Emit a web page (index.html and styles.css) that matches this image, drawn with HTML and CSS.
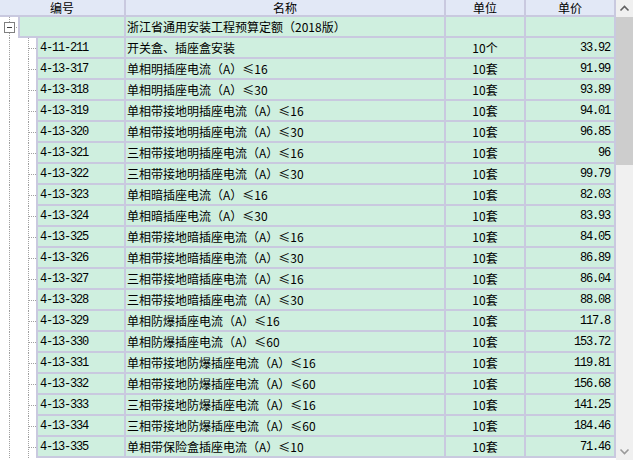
FILE: index.html
```html
<!DOCTYPE html>
<html lang="zh">
<head>
<meta charset="utf-8">
<title>定额</title>
<link rel="stylesheet" href="styles.css">
</head>
<body>
<div class="view">
  <div class="grid">
    <div class="head">
      <div class="hc c-code">编号</div>
      <div class="hc c-name">名称</div>
      <div class="hc c-unit">单位</div>
      <div class="hc c-price">单价</div>
    </div>
    <div class="row root">
      <div class="gutter"><span class="box"><span class="minus"></span></span><span class="stub"></span></div>
      <div class="cell c-code first"></div>
      <div class="cell c-name">浙江省通用安装工程预算定额（2018版）</div>
      <div class="cell c-unit"></div>
      <div class="cell c-price"></div>
    </div>
    <div class="row child"><div class="gutter"><span class="stub"></span></div><div class="cell c-code first">4-11-211</div><div class="cell c-name">开关盒、插座盒安装</div><div class="cell c-unit">10个</div><div class="cell c-price">33.92</div></div>
    <div class="row child"><div class="gutter"><span class="stub"></span></div><div class="cell c-code first">4-13-317</div><div class="cell c-name">单相明插座电流（A）≤16</div><div class="cell c-unit">10套</div><div class="cell c-price">91.99</div></div>
    <div class="row child"><div class="gutter"><span class="stub"></span></div><div class="cell c-code first">4-13-318</div><div class="cell c-name">单相明插座电流（A）≤30</div><div class="cell c-unit">10套</div><div class="cell c-price">93.89</div></div>
    <div class="row child"><div class="gutter"><span class="stub"></span></div><div class="cell c-code first">4-13-319</div><div class="cell c-name">单相带接地明插座电流（A）≤16</div><div class="cell c-unit">10套</div><div class="cell c-price">94.01</div></div>
    <div class="row child"><div class="gutter"><span class="stub"></span></div><div class="cell c-code first">4-13-320</div><div class="cell c-name">单相带接地明插座电流（A）≤30</div><div class="cell c-unit">10套</div><div class="cell c-price">96.85</div></div>
    <div class="row child"><div class="gutter"><span class="stub"></span></div><div class="cell c-code first">4-13-321</div><div class="cell c-name">三相带接地明插座电流（A）≤16</div><div class="cell c-unit">10套</div><div class="cell c-price">96</div></div>
    <div class="row child"><div class="gutter"><span class="stub"></span></div><div class="cell c-code first">4-13-322</div><div class="cell c-name">三相带接地明插座电流（A）≤30</div><div class="cell c-unit">10套</div><div class="cell c-price">99.79</div></div>
    <div class="row child"><div class="gutter"><span class="stub"></span></div><div class="cell c-code first">4-13-323</div><div class="cell c-name">单相暗插座电流（A）≤16</div><div class="cell c-unit">10套</div><div class="cell c-price">82.03</div></div>
    <div class="row child"><div class="gutter"><span class="stub"></span></div><div class="cell c-code first">4-13-324</div><div class="cell c-name">单相暗插座电流（A）≤30</div><div class="cell c-unit">10套</div><div class="cell c-price">83.93</div></div>
    <div class="row child"><div class="gutter"><span class="stub"></span></div><div class="cell c-code first">4-13-325</div><div class="cell c-name">单相带接地暗插座电流（A）≤16</div><div class="cell c-unit">10套</div><div class="cell c-price">84.05</div></div>
    <div class="row child"><div class="gutter"><span class="stub"></span></div><div class="cell c-code first">4-13-326</div><div class="cell c-name">单相带接地暗插座电流（A）≤30</div><div class="cell c-unit">10套</div><div class="cell c-price">86.89</div></div>
    <div class="row child"><div class="gutter"><span class="stub"></span></div><div class="cell c-code first">4-13-327</div><div class="cell c-name">三相带接地暗插座电流（A）≤16</div><div class="cell c-unit">10套</div><div class="cell c-price">86.04</div></div>
    <div class="row child"><div class="gutter"><span class="stub"></span></div><div class="cell c-code first">4-13-328</div><div class="cell c-name">三相带接地暗插座电流（A）≤30</div><div class="cell c-unit">10套</div><div class="cell c-price">88.08</div></div>
    <div class="row child"><div class="gutter"><span class="stub"></span></div><div class="cell c-code first">4-13-329</div><div class="cell c-name">单相防爆插座电流（A）≤16</div><div class="cell c-unit">10套</div><div class="cell c-price">117.8</div></div>
    <div class="row child"><div class="gutter"><span class="stub"></span></div><div class="cell c-code first">4-13-330</div><div class="cell c-name">单相防爆插座电流（A）≤60</div><div class="cell c-unit">10套</div><div class="cell c-price">153.72</div></div>
    <div class="row child"><div class="gutter"><span class="stub"></span></div><div class="cell c-code first">4-13-331</div><div class="cell c-name">单相带接地防爆插座电流（A）≤16</div><div class="cell c-unit">10套</div><div class="cell c-price">119.81</div></div>
    <div class="row child"><div class="gutter"><span class="stub"></span></div><div class="cell c-code first">4-13-332</div><div class="cell c-name">单相带接地防爆插座电流（A）≤60</div><div class="cell c-unit">10套</div><div class="cell c-price">156.68</div></div>
    <div class="row child"><div class="gutter"><span class="stub"></span></div><div class="cell c-code first">4-13-333</div><div class="cell c-name">三相带接地防爆插座电流（A）≤16</div><div class="cell c-unit">10套</div><div class="cell c-price">141.25</div></div>
    <div class="row child"><div class="gutter"><span class="stub"></span></div><div class="cell c-code first">4-13-334</div><div class="cell c-name">三相带接地防爆插座电流（A）≤60</div><div class="cell c-unit">10套</div><div class="cell c-price">184.46</div></div>
    <div class="row child"><div class="gutter"><span class="stub"></span></div><div class="cell c-code first">4-13-335</div><div class="cell c-name">单相带保险盒插座电流（A）≤10</div><div class="cell c-unit">10套</div><div class="cell c-price">71.46</div></div>
  </div>
  <div class="scrollbar">
    <div class="sb-btn"><svg width="17" height="17" viewBox="0 0 17 17"><path d="M4.5 10.5 L8.5 6.5 L12.5 10.5" fill="none" stroke="#606060" stroke-width="1.6"/></svg></div>
    <div class="sb-thumb"></div>
    <div class="sb-track"></div>
    <div class="sb-btn"><svg width="17" height="17" viewBox="0 0 17 17"><path d="M4.5 6.5 L8.5 10.5 L12.5 6.5" fill="none" stroke="#9a9a9a" stroke-width="1.6"/></svg></div>
  </div>
</div>
</body>
</html>
```

FILE: styles.css
```css
html, body {
  margin: 0;
  padding: 0;
  background: #ffffff;
  overflow: hidden;
}

.view {
  display: flex;
  width: 633px;
  height: 460px;
  font-family: "Noto Sans CJK SC", sans-serif;
  font-size: 12px;
  color: #000;
}

.grid {
  width: 616px;
  display: flex;
  flex-direction: column;
  overflow: hidden;
}

.head {
  display: flex;
  height: 17px;
  flex: none;
  background: #e2e8f6;
  border-bottom: 2px solid #c9c9df;
  box-sizing: border-box;
}

.hc {
  box-sizing: border-box;
  border-right: 2px solid #c9c9df;
  text-align: center;
  line-height: 15px;
  font-size: 12px;
}

.hc.c-code { width: 126px; }
.c-name { width: 320px; }
.c-unit { width: 80px; }
.c-price { width: 90px; }

.row {
  display: flex;
  height: 21px;
  flex: none;
}

.gutter {
  flex: none;
  display: flex;
  align-items: center;
  background-image: linear-gradient(to bottom, #a0a0a0 50%, transparent 50%);
  background-size: 1px 2px;
  background-repeat: repeat-y;
  background-position: 9px 0;
}

.root .gutter {
  width: 18px;
  background-position: 9px 16px;
  background-size: 1px 2px;
}

.child .gutter {
  width: 36px;
  background-image:
    linear-gradient(to bottom, #a0a0a0 50%, transparent 50%),
    linear-gradient(to bottom, #a0a0a0 50%, transparent 50%);
  background-size: 1px 2px, 1px 2px;
  background-position: 9px 0, 28px 0;
}

.box {
  box-sizing: border-box;
  width: 11px;
  height: 11px;
  margin-left: 4px;
  border: 1px solid #808080;
  background: #fff;
  display: flex;
  align-items: center;
  justify-content: center;
  flex: none;
}

.minus {
  width: 5px;
  height: 1px;
  background: #404040;
}

.stub {
  height: 0;
  border-top: 1px dotted #a0a0a0;
  flex: none;
}

.root .stub {
  width: 3px;
  margin-left: 1px;
}

.child .stub {
  width: 8px;
  margin-left: 28px;
}

.cell {
  box-sizing: border-box;
  height: 21px;
  background: #cfefdf;
  border-right: 2px solid #c9c9df;
  border-bottom: 2px solid #c9c9df;
  line-height: 19px;
  white-space: nowrap;
  overflow: hidden;
}

.cell.first {
  border-left: 2px solid #c9c9df;
}

.row .c-code {
  flex: 1;
  padding-left: 2px;
  font-family: "Liberation Mono", monospace;
  font-size: 12px;
  letter-spacing: -1.2px;
  line-height: 21px;
}

.cell.c-name {
  padding-left: 1px;
}

.cell.c-unit {
  text-align: center;
}

.cell.c-price {
  text-align: right;
  padding-right: 4px;
  font-family: "Liberation Mono", monospace;
  font-size: 12px;
  letter-spacing: -1.2px;
  line-height: 21px;
}

.scrollbar {
  width: 17px;
  display: flex;
  flex-direction: column;
  background: #f0f0f0;
}

.sb-btn {
  height: 17px;
  flex: none;
  display: flex;
}

.sb-thumb {
  height: 148px;
  flex: none;
  background: #cdcdcd;
}

.sb-track {
  flex: 1;
}
```
